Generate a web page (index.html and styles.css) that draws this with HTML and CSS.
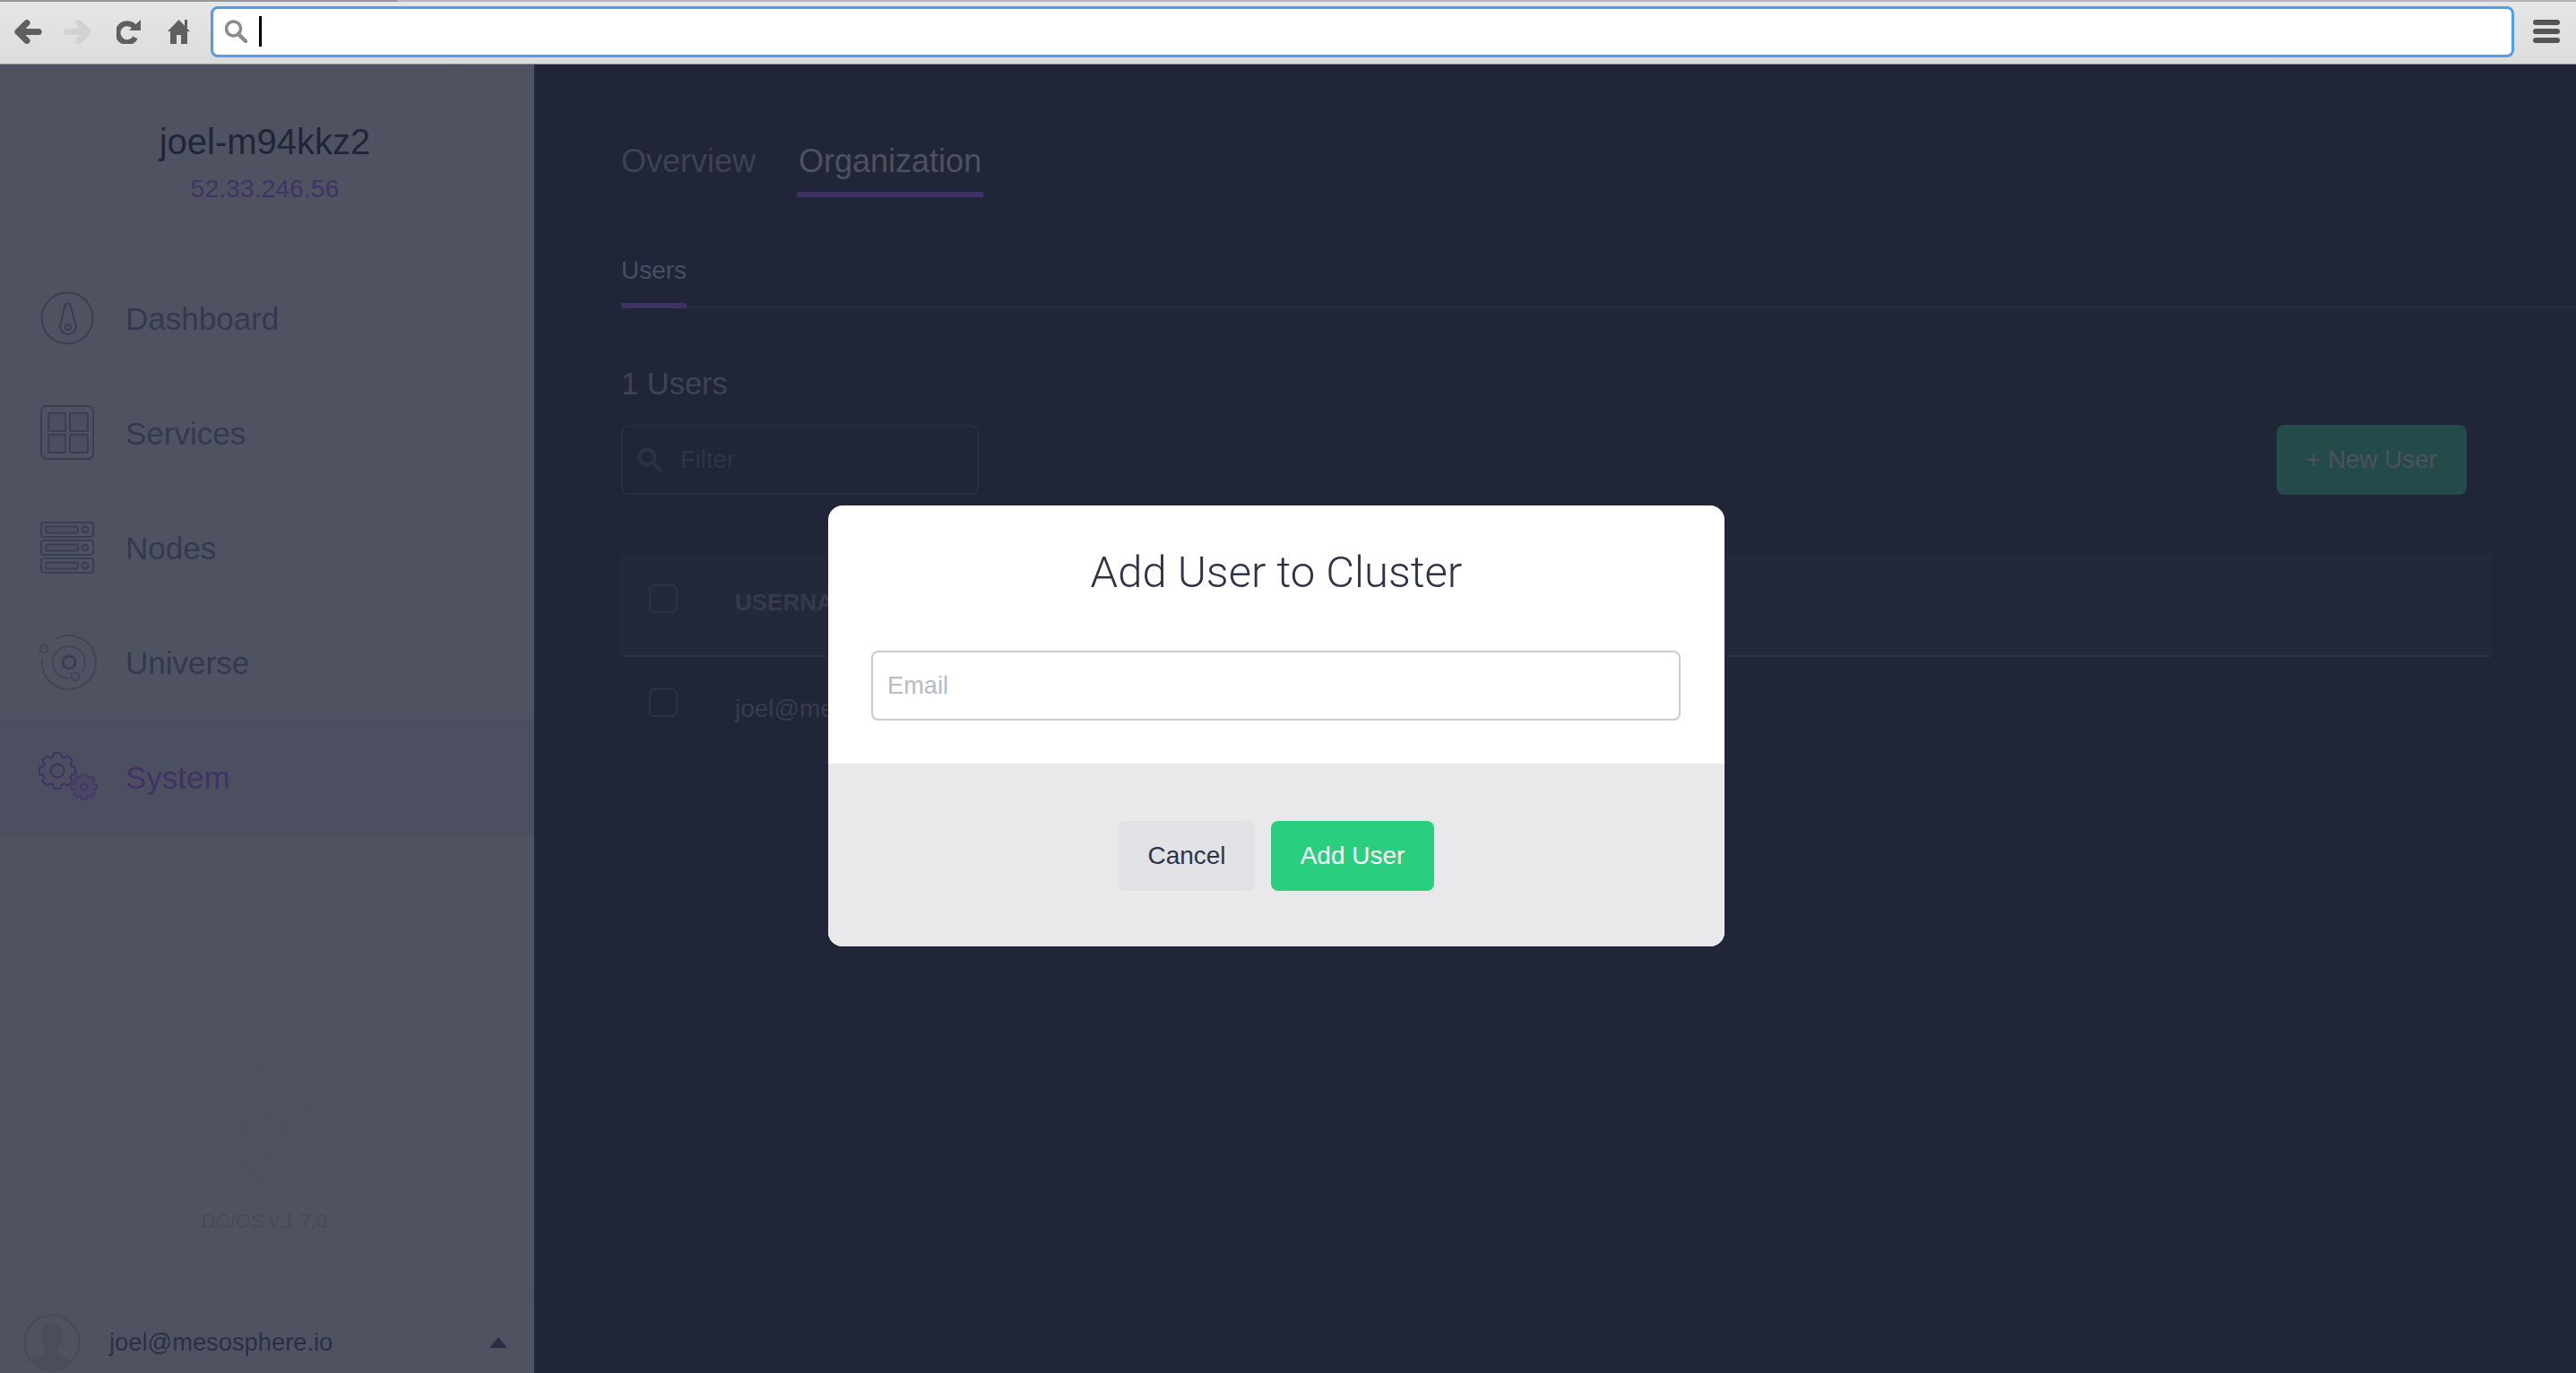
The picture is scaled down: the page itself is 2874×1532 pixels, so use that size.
FILE: index.html
```html
<!DOCTYPE html>
<html lang="en">
<head>
    <meta charset="UTF-8">
    <meta name="viewport" content="width=device-width, initial-scale=1.0">
    <title>DC/OS - Organization</title>
    <link rel="stylesheet" href="styles.css">
</head>
<body>
    <!-- browser chrome -->
    <div class="top-strip"><span class="top-strip-left"></span></div>
    <header class="browser-bar">
        <svg class="btn-back" width="31" height="27" viewBox="0 0 31 27"><path d="M4 13.5H27M14 3.5L4 13.5L14 23.5" fill="none" stroke="#5f5f5f" stroke-width="7" stroke-linecap="round" stroke-linejoin="round"/></svg>
        <svg class="btn-forward" width="31" height="27" viewBox="0 0 31 27"><path d="M27 13.5H4M17 3.5L27 13.5L17 23.5" fill="none" stroke="#d2d2d2" stroke-width="7" stroke-linecap="round" stroke-linejoin="round"/></svg>
        <svg class="btn-reload" width="27" height="27" viewBox="0 0 27 27"><path d="M20 8A10.5 10.5 0 1 0 21 20" fill="none" stroke="#5f5f5f" stroke-width="6"/><path d="M14 12L27 0V12Z" fill="#5f5f5f"/></svg>
        <svg class="btn-home" width="25" height="27" viewBox="0 0 25 27"><path d="M12.5 0L25 13H22V27H15V17H10V27H3V13H0Z" fill="#5f5f5f"/><rect x="19" y="0" width="3" height="9" fill="#5f5f5f"/></svg>
        <div class="address-bar">
            <svg width="26" height="26" viewBox="0 0 26 26"><circle cx="10.5" cy="10" r="8" fill="none" stroke="#8b8b8b" stroke-width="3.5"/><path d="M16 16L24 24" stroke="#8b8b8b" stroke-width="4.5" stroke-linecap="round"/></svg>
            <span class="caret"></span>
        </div>
        <div class="menu-btn"><span></span><span></span><span></span></div>
    </header>

    <div class="app">
        <aside class="sidebar">
            <div class="host">
                <div class="host-name">joel-m94kkz2</div>
                <div class="host-ip">52.33.246.56</div>
            </div>

            <nav class="nav">
                <a class="nav-item">
                    <svg class="nav-icon" width="72" height="72" viewBox="0 0 72 72" fill="none" stroke="#3a3e52" stroke-width="2"><circle cx="36" cy="36" r="28.5"/><path d="M34 20H39L46 45A9 9 0 1 1 28 45Z"/><circle cx="37" cy="46" r="3"/></svg>
                    <span>Dashboard</span>
                </a>
                <a class="nav-item">
                    <svg class="nav-icon" width="72" height="72" viewBox="0 0 72 72" fill="none" stroke="#3a3e52" stroke-width="2"><rect x="7" y="6" width="58" height="59" rx="6"/><rect x="15" y="14" width="19" height="20" rx="1" fill="#4a4e5f"/><rect x="39" y="14" width="20" height="20" rx="1" fill="#4a4e5f"/><rect x="15" y="38" width="19" height="20" rx="1" fill="#4a4e5f"/><rect x="39" y="38" width="20" height="20" rx="1" fill="#4a4e5f"/></svg>
                    <span>Services</span>
                </a>
                <a class="nav-item">
                    <svg class="nav-icon" width="72" height="72" viewBox="0 0 72 72" fill="none" stroke="#3a3e52" stroke-width="2">
                        <rect x="7" y="8" width="58" height="16" rx="3"/><rect x="12" y="12.5" width="36" height="7" rx="1" fill="#4a4e5f"/><circle cx="56" cy="16" r="3.5" fill="#4a4e5f"/>
                        <rect x="7" y="28" width="58" height="16" rx="3"/><rect x="12" y="32.5" width="36" height="7" rx="1" fill="#4a4e5f"/><circle cx="56" cy="36" r="3.5" fill="#4a4e5f"/>
                        <rect x="7" y="48" width="58" height="16" rx="3"/><rect x="12" y="52.5" width="36" height="7" rx="1" fill="#4a4e5f"/><circle cx="56" cy="56" r="3.5" fill="#4a4e5f"/>
                    </svg>
                    <span>Nodes</span>
                </a>
                <a class="nav-item">
                    <svg class="nav-icon" width="72" height="72" viewBox="0 0 72 72" fill="none" stroke="#414557" stroke-width="2"><path d="M23 10A30 30 0 1 1 8.2 32"/><path d="M38 54A18 18 0 1 1 52 47"/><circle cx="38" cy="36" r="7" stroke-width="3" stroke="#3a3e52"/><circle cx="10" cy="21" r="4.5"/><circle cx="45" cy="52" r="4.5"/></svg>
                    <span>Universe</span>
                </a>
                <a class="nav-item active">
                    <svg class="nav-icon" width="72" height="72" viewBox="0 0 72 72" fill="none" stroke="#3e3364" stroke-width="2" stroke-linejoin="round">
                        <defs><polygon id="gear" points="-5,-15.5 -3.5,-20 3.5,-20 5,-15.5 7.4,-14.5 11.7,-16.6 16.6,-11.7 14.5,-7.4 15.5,-5 20,-3.5 20,3.5 15.5,5 14.5,7.4 16.6,11.7 11.7,16.6 7.4,14.5 5,15.5 3.5,20 -3.5,20 -5,15.5 -7.4,14.5 -11.7,16.6 -16.6,11.7 -14.5,7.4 -15.5,5 -20,3.5 -20,-3.5 -15.5,-5 -14.5,-7.4 -16.6,-11.7 -11.7,-16.6 -7.4,-14.5"/></defs>
                        <use href="#gear" transform="translate(25 29)"/>
                        <circle cx="25" cy="29" r="7.5"/>
                        <use class="gear-small" href="#gear" transform="translate(55 47) scale(.7)"/>
                        <circle cx="55" cy="47" r="3.5" stroke="#423766"/>
                    </svg>
                    <span>System</span>
                </a>
            </nav>

            <div class="brand">
                <svg width="140" height="160" viewBox="0 0 140 160" fill="#4d5160">
                    <path d="M70 8L84 22L70 36L56 22Z"/>
                    <path d="M50 31L64 45L50 59L36 45Z"/>
                    <path d="M92 31L106 45L92 59L78 45Z"/>
                    <path d="M30 56L44 70L30 84L16 70Z"/>
                    <path d="M72 56L86 70L72 84L58 70Z"/>
                    <path d="M112 56L126 70L112 84L98 70Z"/>
                    <path d="M50 76L64 90L50 104L36 90Z"/>
                    <path d="M92 76L106 90L92 104L78 90Z"/>
                    <path d="M70 98L84 112L70 126L56 112Z"/>
                    <path d="M14 94L70 150L128 94L132 98L70 158L10 98Z"/>
                </svg>
                <div class="brand-version">DC/OS v.1.7.0</div>
            </div>

            <div class="user-bar">
                <svg width="64" height="64" viewBox="0 0 64 64"><circle cx="32" cy="32" r="30.5" fill="none" stroke="#464a58" stroke-width="2"/><path d="M20 24C20 6 43 6 43 24C43 32 40 37 38 40V45C45 48 52 50 55 53C44 66 20 66 9 53C12 50 19 48 25 45V40C23 37 20 32 20 24Z" fill="#4a4e5c"/></svg>
                <span class="user-email">joel@mesosphere.io</span>
                <span class="user-arrow"></span>
            </div>
        </aside>

        <main class="content">
            <div class="tabs">
                <a class="tab">Overview</a>
                <a class="tab tab-active">Organization</a>
            </div>
            <div class="subtabs">
                <a class="subtab">Users</a>
            </div>
            <h3 class="count">1 Users</h3>
            <div class="filter-row">
                <div class="filter">
                    <svg width="28" height="28" viewBox="0 0 28 28"><circle cx="11" cy="11" r="8.5" fill="none" stroke="#2c3144" stroke-width="4"/><path d="M17 17L26 26" stroke="#2c3144" stroke-width="4.5" stroke-linecap="round"/></svg>
                    <span>Filter</span>
                </div>
                <button class="new-user">+ New User</button>
            </div>
            <div class="user-table">
                <div class="table-head">
                    <span class="check"></span>
                    <span class="col-name">USERNAME</span>
                </div>
                <div class="table-row">
                    <span class="check"></span>
                    <span class="col-name">joel@mesosphere.io</span>
                </div>
            </div>
        </main>
    </div>

    <!-- add user dialog -->
    <div class="modal">
        <div class="modal-body">
            <h2 class="modal-title">Add User to Cluster</h2>
            <input class="modal-input" type="text" placeholder="Email">
        </div>
        <div class="modal-footer">
            <button class="btn btn-cancel">Cancel</button>
            <button class="btn btn-add">Add User</button>
        </div>
    </div>
</body>
</html>
```

FILE: styles.css
```css
* {
    box-sizing: border-box;
}

html, body {
    height: 100%;
}

body {
    margin: 0;
    overflow: hidden;
    display: flex;
    flex-direction: column;
    font-family: "Liberation Sans", Arial, sans-serif;
    background-color: #202637;
}

/* browser chrome */
.top-strip {
    height: 2px;
    background-color: #b5b5b5;
}

.top-strip-left {
    display: block;
    width: 443px;
    height: 2px;
    background-color: #979797;
}

.browser-bar {
    height: 70px;
    display: flex;
    align-items: center;
    padding: 0 18px 3px 16px;
    background: linear-gradient(#e6e6e6, #dcdcdc);
    border-bottom: 1px solid #8f8f8f;
}

.btn-forward {
    margin-left: 24px;
}

.btn-reload {
    margin-left: 28px;
}

.btn-home {
    margin-left: 30px;
}

.address-bar {
    flex: 1;
    height: 57px;
    margin: 0 21px 0 23px;
    padding-left: 12px;
    display: flex;
    align-items: center;
    background-color: white;
    border: 3px solid #4d9fee;
    border-radius: 8px;
}

.caret {
    width: 3px;
    height: 34px;
    margin-left: 13px;
    background-color: black;
}

.menu-btn {
    display: flex;
    flex-direction: column;
    gap: 4px;
}

.menu-btn span {
    width: 30px;
    height: 6px;
    border-radius: 3px;
    background-color: #555;
}

/* layout */
.app {
    flex: 1;
    display: flex;
    min-height: 0;
}

.sidebar {
    width: 596px;
    display: flex;
    flex-direction: column;
    background-color: #4f5361;
}

.host {
    height: 219px;
    padding: 62px 5px 0 0;
    text-align: center;
}

.host-name {
    font-size: 40px;
    line-height: 48px;
    color: #20253a;
}

.host-ip {
    margin-top: 10px;
    font-size: 28.4px;
    line-height: 36px;
    color: #3e3364;
}

.nav-item {
    height: 128px;
    padding-left: 39px;
    display: flex;
    align-items: center;
    gap: 29px;
    font-size: 35px;
    color: #343850;
}

.nav-item span {
    margin-top: 2px;
}

.nav-item.active {
    background-color: #4c4f5f;
    color: #3e3364;
}

.gear-small {
    fill: #4b4865;
    stroke: #433a66;
    stroke-width: 2.8;
}

.brand {
    margin-top: auto;
    padding: 0 6px 65px 0;
    display: flex;
    flex-direction: column;
    align-items: center;
}

.brand-version {
    margin-top: 18px;
    font-size: 22px;
    line-height: 30px;
    color: #464a59;
}

.user-bar {
    height: 89px;
    padding: 19px 30px 0 26px;
    display: flex;
    align-items: center;
    gap: 32px;
    border-top: 1px solid #494d5b;
}

.user-email {
    font-size: 27.3px;
    color: #2b2f44;
}

.user-arrow {
    margin-left: auto;
    border-left: 10px solid transparent;
    border-right: 10px solid transparent;
    border-bottom: 12px solid #2a2f45;
}

/* main area */
.content {
    flex: 1;
    padding: 85px 0 0 97px;
}

.tabs {
    display: flex;
    gap: 44px;
    margin-left: -2px;
}

.tab {
    padding: 1px 2px 12px;
    font-size: 36px;
    line-height: 44px;
    color: #3e4252;
    border-bottom: 6px solid transparent;
}

.tab-active {
    color: #4d5161;
    border-bottom-color: #3e3163;
}

.subtabs {
    display: flex;
    margin-top: 64px;
    border-bottom: 2px solid #2a2f41;
}

.subtab {
    margin-bottom: -2px;
    padding-bottom: 18px;
    font-size: 28px;
    line-height: 36px;
    color: #4a4e5e;
    border-bottom: 6px solid #3e3163;
}

.count {
    margin: 62px 0 0;
    font-size: 34.5px;
    font-weight: normal;
    line-height: 44px;
    color: #3f4353;
}

.filter-row {
    display: flex;
    justify-content: space-between;
    margin: 24px 122px 0 0;
}

.filter {
    width: 399px;
    height: 78px;
    padding-left: 16px;
    display: flex;
    align-items: center;
    gap: 20px;
    font-size: 27.4px;
    color: #2f3446;
    border: 2px solid #282d3f;
    border-radius: 8px;
}

.new-user {
    width: 212px;
    height: 78px;
    padding: 0;
    font-family: inherit;
    font-size: 27.8px;
    color: #4d5161;
    background-color: #254a4a;
    border: none;
    border-radius: 8px;
}

.user-table {
    margin: 66px 94px 0 0;
}

.table-head,
.table-row {
    display: flex;
    align-items: flex-start;
    padding-left: 31px;
}

.table-head {
    height: 115px;
    padding-top: 34px;
    font-size: 26px;
    font-weight: bold;
    color: #363a4b;
    background-color: #232939;
    border-bottom: 2px solid #2d3243;
}

.table-row {
    padding-top: 35px;
    font-size: 28px;
    color: #383c4f;
}

.check {
    width: 32px;
    height: 32px;
    border: 2px solid #2d3245;
    border-radius: 6px;
}

.col-name {
    margin: 3px 0 0 64px;
    line-height: 34px;
}

.table-row .col-name {
    margin-top: 6px;
}

/* dialog */
.modal {
    position: absolute;
    left: 924px;
    top: 564px;
    width: 1000px;
    height: 492px;
    overflow: hidden;
    background-color: white;
    border-radius: 16px;
}

.modal-body {
    height: 288px;
    padding: 45px 0 0 48px;
}

.modal-title {
    margin: 0 48px 0 0;
    font-family: Roboto, "Liberation Sans", sans-serif;
    font-size: 49px;
    font-weight: 300;
    line-height: 60px;
    text-align: center;
    color: #2e3349;
}

.modal-input {
    display: block;
    width: 903px;
    height: 78px;
    margin-top: 57px;
    padding: 0 16px;
    font-family: inherit;
    font-size: 27.2px;
    border: 2px solid #cbcbcd;
    border-radius: 8px;
}

.modal-input::placeholder {
    color: #b8bac4;
    opacity: 1;
}

.modal-footer {
    height: 204px;
    padding-top: 64px;
    display: flex;
    justify-content: center;
    align-items: flex-start;
    gap: 18px;
    background-color: #e9e9eb;
}

.btn {
    height: 78px;
    padding: 0;
    font-family: inherit;
    font-size: 28px;
    border: none;
    border-radius: 8px;
}

.btn-cancel {
    width: 152px;
    color: #2e3349;
    background-color: #e1e2e5;
}

.btn-add {
    width: 182px;
    color: white;
    background-color: #2ace7f;
}
```
